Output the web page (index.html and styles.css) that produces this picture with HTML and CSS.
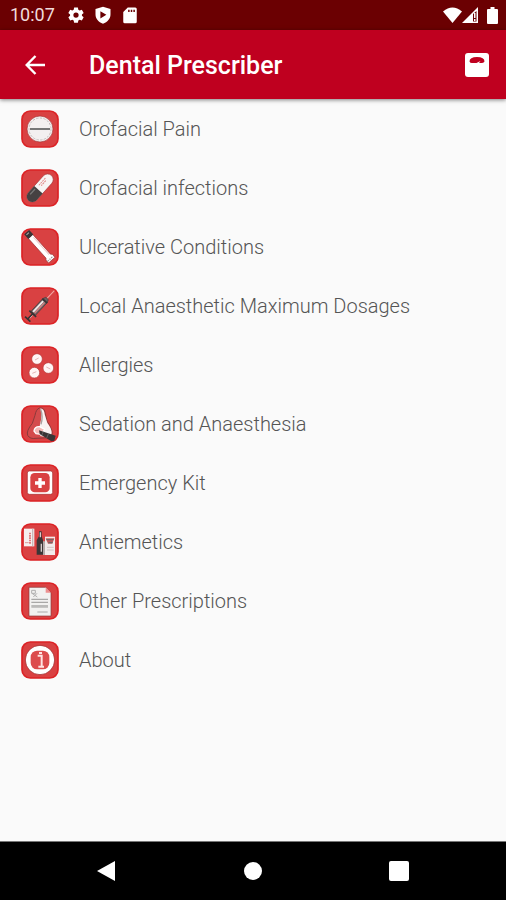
FILE: index.html
```
<!DOCTYPE html>
<html lang="en">
  <head>
    <meta charset="utf-8">
    <meta name="viewport" content="width=device-width, initial-scale=1">
    <title>Dental Prescriber</title>
    <link rel="stylesheet" href="styles.css">
  </head>
  <body>
    <div class="status-bar">
      <span class="clock">10:07</span>
      <svg class="status-icon" width="18" height="18" viewBox="0 0 24 24" fill="currentColor"><path fill-rule="evenodd" d="M9.500 2h5l.6 3 1.800 1 2.900-1 2.400 4.200-2.300 2v1.800l2.300 2-2.400 4.200-2.900-1-1.800 1-.6 3h-5l-.6-3-1.800-1-2.900 1L1.800 15l2.300-2v-1.800l-2.300-2L4.200 5l2.900 1 1.800-1zM12 8.500a3.500 3.500 0 1 0 0 7 3.500 3.500 0 0 0 0-7z"/></svg>
      <svg class="status-icon" width="18" height="18" viewBox="0 0 24 24" fill="currentColor"><path fill-rule="evenodd" d="M12 1l10 3v7c0 6-4 10.500-10 12.500C6 21.500 2 17 2 11V4zM8.500 7v9.500l8-4.700z"/></svg>
      <svg class="status-icon" width="18" height="18" viewBox="0 0 24 24" fill="currentColor"><path fill-rule="evenodd" d="M9 2h10a2 2 0 0 1 2 2v17a2 2 0 0 1-2 2H5a2 2 0 0 1-2-2V8zM9.500 5v3h2V5zM13 5v3h2V5zM16.500 5v3h2V5z"/></svg>
      <div class="status-right">
        <svg width="19" height="17" viewBox="0 0 19 17" fill="currentColor"><path d="M0 4.500Q9.500-3.500 19 4.500L9.500 16z"/></svg>
        <svg width="17" height="17" viewBox="0 0 17 17" fill="currentColor"><path fill-rule="evenodd" d="M16 0v16H0zM11 7v7.500h3.500V4z"/><path d="M12 6h1.500v5H12zM12 12h1.500v2H12z"/></svg>
        <svg class="battery" width="11" height="17" viewBox="0 0 11 17" fill="currentColor"><path d="M3.500 0h4v2H10q1 0 1 1v13q0 1-1 1H1q-1 0-1-1V3q0-1 1-1h2.500z"/></svg>
      </div>
    </div>

    <header class="app-bar">
      <button type="button" class="icon-btn" aria-label="Back">
        <svg width="20" height="20" viewBox="0 0 20 20" fill="none" stroke="currentColor" stroke-width="2.400"><path d="M20 10H2M10.500 1L1.700 10l8.800 9"/></svg>
      </button>
      <h1>Dental Prescriber</h1>
      <button type="button" class="icon-btn" aria-label="Weight">
        <svg width="24" height="24" viewBox="0 0 24 24"><rect width="24" height="24" rx="3" fill="#fff"/><path d="M4.500 8.500q0-4.500 7.500-4.500t7.500 4.500q-1 1.500-3 1.500h-2.500l1.500-2-4 2H7q-2 0-2.500-1.500z" fill="#bf001f"/></svg>
      </button>
    </header>

    <main>
      <ul class="menu">
        <li><a href="#pain">
          <svg class="tile" viewBox="0 0 114 114"><rect class="tile-bg" x="3" y="3" width="108" height="108" rx="25"/><circle cx="57" cy="57" r="39" fill="#f3f0f0" stroke="#a52a2c" stroke-width="2"/><circle cx="57" cy="57" r="33" fill="none" stroke="#c5bebe" stroke-width="3" stroke-dasharray="7 4"/><path d="M27 57h60" stroke="#777" stroke-width="6"/></svg>
          Orofacial Pain</a></li>
        <li><a href="#infections">
          <svg class="tile" viewBox="0 0 114 114"><rect class="tile-bg" x="3" y="3" width="108" height="108" rx="25"/><g transform="rotate(42 57 57)"><rect x="40" y="6" width="34" height="102" rx="17" fill="#f7f4f4" stroke="#a5393b" stroke-width="2"/><path d="M40 64h34v27a17 17 0 0 1-34 0z" fill="#454142"/><path d="M48 69v22" stroke="#777" stroke-width="4"/><path d="M49 24v29M55 29v20" stroke="#df8585" stroke-width="3" stroke-dasharray="6 2"/></g></svg>
          Orofacial infections</a></li>
        <li><a href="#ulcerative">
          <svg class="tile" viewBox="0 0 114 114"><rect class="tile-bg" x="3" y="3" width="108" height="108" rx="25"/><g transform="rotate(-42 57 57)"><path d="M48 14h18v80l4 4v12H44V98l4-4z" fill="#fff" stroke="#9c3435" stroke-width="2"/><path d="M62 22v70" stroke="#f0caca" stroke-width="3"/><path d="M47-3h20v19H47z" fill="#393536"/><path d="M51 3h10" stroke="#aaa" stroke-width="3"/><path d="M46 104h22" stroke="#999" stroke-width="4" stroke-dasharray="4 3"/></g></svg>
          Ulcerative Conditions</a></li>
        <li><a href="#dosages">
          <svg class="tile" viewBox="0 0 114 114"><rect class="tile-bg" x="3" y="3" width="108" height="108" rx="25"/><g transform="rotate(43 57 57)"><path d="M57-6v34" stroke="#f3aaa5" stroke-width="3"/><path d="M52 26h10l4 9v52H48V35z" fill="#6a6061" stroke="#453c3d" stroke-width="2"/><path d="M54 40v44" stroke="#f2e8e8" stroke-width="6"/><path d="M60 40v44" stroke="#d28485" stroke-width="4"/><path d="M47 36h20M43 89h28M57 89v21M46 111h22" fill="none" stroke="#373334" stroke-width="5"/><path d="M60 93v12" stroke="#ddd" stroke-width="2"/></g></svg>
          Local Anaesthetic Maximum Dosages</a></li>
        <li><a href="#allergies">
          <svg class="tile" viewBox="0 0 114 114"><rect class="tile-bg" x="3" y="3" width="108" height="108" rx="25"/><g fill="#fff5f5" stroke="#b7393a" stroke-width="2"><circle cx="48" cy="39" r="16"/><circle cx="82" cy="66" r="16"/><circle cx="40" cy="80" r="16"/></g><path d="M42 42l11-6M76 63l12 6M34 82l12-5" stroke="#e3b5b5" stroke-width="3"/></svg>
          Allergies</a></li>
        <li><a href="#sedation">
          <svg class="tile" viewBox="0 0 114 114"><rect class="tile-bg" x="3" y="3" width="108" height="108" rx="25"/><path d="M55 9Q45 13 42 31L34 55Q15 78 20 91q7 12 25 9l38-2q13-5 10-20Q90 66 78 48L71 18Q67 7 55 9z" fill="#d44b4c" stroke="#8a3a3b" stroke-width="3"/><path d="M58 10q12 2 13 18l8 26q12 15 13 28 0 11-11 15l-24-4 9-15q-13-3-9-20 8-29 1-48z" fill="#f9f3f3"/><path d="M59 13q8 22 1 45" fill="none" stroke="#aaa0a0" stroke-width="4"/><path d="M39 78q2-14 17-13l15 8-10 15-16-2z" fill="#f6b9b7" stroke="#fff" stroke-width="4"/><path d="M54 76l50 16-4 15-9 2-35-22z" fill="#393536"/><path d="M67 80l-5 11M83 85l-6 14" stroke="#777" stroke-width="2"/></svg>
          Sedation and Anaesthesia</a></li>
        <li><a href="#emergency">
          <svg class="tile" viewBox="0 0 114 114"><rect class="tile-bg" x="3" y="3" width="108" height="108" rx="25"/><rect x="19" y="21" width="76" height="70" rx="6" fill="#fff" stroke="#a52a2c" stroke-width="2"/><rect x="28" y="27" width="58" height="58" rx="13" fill="#d94142"/><path d="M57 42v30M42 57h30" stroke="#fff" stroke-width="10"/></svg>
          Emergency Kit</a></li>
        <li><a href="#antiemetics">
          <svg class="tile" viewBox="0 0 114 114"><rect class="tile-bg" x="3" y="3" width="108" height="108" rx="25"/><path d="M9 17h31v53H9z" fill="#f6eeee"/><path d="M35 17v53" stroke="#c7b9b9" stroke-width="4"/><path d="M27 29v35" stroke="#d24749" stroke-width="4" stroke-dasharray="5 2"/><path d="M12 59h11" stroke="#d99b9b" stroke-width="3"/><path d="M54 25h8v15l4 12v43H47V52l7-12z" fill="#3b3637"/><path d="M58 28v15M61 62v24" stroke="#d7cccc" stroke-width="4"/><path d="M72 41h30v55H72z" fill="#f2ebeb"/><path d="M74 46h26l-6 16H81z" fill="#c45a5c"/><path d="M76 50h22M82 59h13" stroke="#666" stroke-width="3"/><path d="M66 55h6v41h-6z" fill="#b6aaaa"/><path d="M78 73h20M78 81h20" stroke="#d1c3c3" stroke-width="3"/></svg>
          Antiemetics</a></li>
        <li><a href="#other">
          <svg class="tile" viewBox="0 0 114 114"><rect class="tile-bg" x="3" y="3" width="108" height="108" rx="25"/><path d="M24 16h50l16 16v70H24z" fill="#f2f1f0" stroke="#8b3637" stroke-width="2"/><path d="M74 16v16h16z" fill="#ed9090"/><path d="M32 25h11v9H32zM33 34l16 11M48 34L37 45" fill="none" stroke="#b0afaf" stroke-width="3"/><path d="M31 52h50M31 61h50M31 72h50" stroke="#a9a8a7" stroke-width="4"/><path d="M31 76h50" stroke="#bebdbc" stroke-width="3"/><path d="M49 90h31" stroke="#aaa" stroke-width="3"/></svg>
          Other Prescriptions</a></li>
        <li><a href="#about">
          <svg class="tile" viewBox="0 0 114 114"><rect class="tile-bg" x="3" y="3" width="108" height="108" rx="25"/><circle cx="57" cy="57" r="36" fill="#fff" stroke="#fff" stroke-width="14"/><circle cx="57" cy="57" r="44" fill="none" stroke="#9c383a" stroke-width="2"/><rect x="29" y="29" width="56" height="56" rx="19" fill="#dc4c4d"/><path d="M50 44h12v33M52 77h17M54 36h9" fill="none" stroke="#ffe4e3" stroke-width="6"/></svg>
          About</a></li>
      </ul>
    </main>

    <nav class="nav-bar">
      <button type="button" aria-label="Back"><svg width="20" height="22" viewBox="0 0 20 22" fill="currentColor"><path d="M18 1v20L0 11z"/></svg></button>
      <button type="button" aria-label="Home"><svg width="20" height="20" viewBox="0 0 20 20" fill="currentColor"><circle cx="10" cy="10" r="9"/></svg></button>
      <button type="button" aria-label="Recent apps"><svg width="20" height="20" viewBox="0 0 20 20" fill="currentColor"><rect width="20" height="20" rx="2"/></svg></button>
    </nav>
  </body>
</html>
```
FILE: styles.css
```
* {
  box-sizing: border-box;
}

body {
  display: flex;
  flex-direction: column;
  min-height: 100vh;
  margin: 0;
  background: #fafafa;
  font-family: Roboto, "Liberation Sans", sans-serif;
}

svg {
  display: block;
  flex-shrink: 0;
}

button {
  display: flex;
  align-items: center;
  justify-content: center;
  padding: 0;
  border: none;
  background: none;
  color: #fff;
}

.status-bar {
  display: flex;
  align-items: center;
  height: 30px;
  padding: 0 8px 0 10px;
  background: #6b0002;
  color: #fff;
}

.clock {
  margin-right: 3px;
  font-size: 18px;
  line-height: 30px;
  color: #f0dcdc;
}

.status-icon {
  margin-left: 9px;
}

.status-right {
  display: flex;
  margin-left: auto;
}

.battery {
  margin-left: 8px;
}

.app-bar {
  display: flex;
  align-items: center;
  height: 69px;
  padding: 0 12px 0 18px;
  background: #bf001f;
  color: #fff;
  box-shadow: 0 1px 4px rgba(0, 0, 0, 0.5);
}

.app-bar h1 {
  flex: 1;
  margin: 0 0 0 37px;
  padding-top: 2px;
  font-size: 25px;
  font-weight: 500;
  line-height: 32px;
}

.icon-btn {
  width: 34px;
  height: 40px;
}

main {
  flex: 1;
}

.menu {
  margin: 0;
  padding: 0;
  list-style: none;
}

.menu a {
  display: flex;
  align-items: center;
  gap: 20px;
  height: 59px;
  padding: 0 21px;
  font-size: 20px;
  font-weight: 300;
  color: #555;
  text-decoration: none;
}

.tile {
  width: 38px;
  height: 38px;
}

.tile-bg {
  fill: #d94142;
  stroke: #dc2225;
  stroke-width: 5;
}

.nav-bar {
  display: flex;
  justify-content: center;
  height: 59px;
  border-top: 1px solid #777;
  background: #000;
}

.nav-bar button {
  width: 146px;
}
```
